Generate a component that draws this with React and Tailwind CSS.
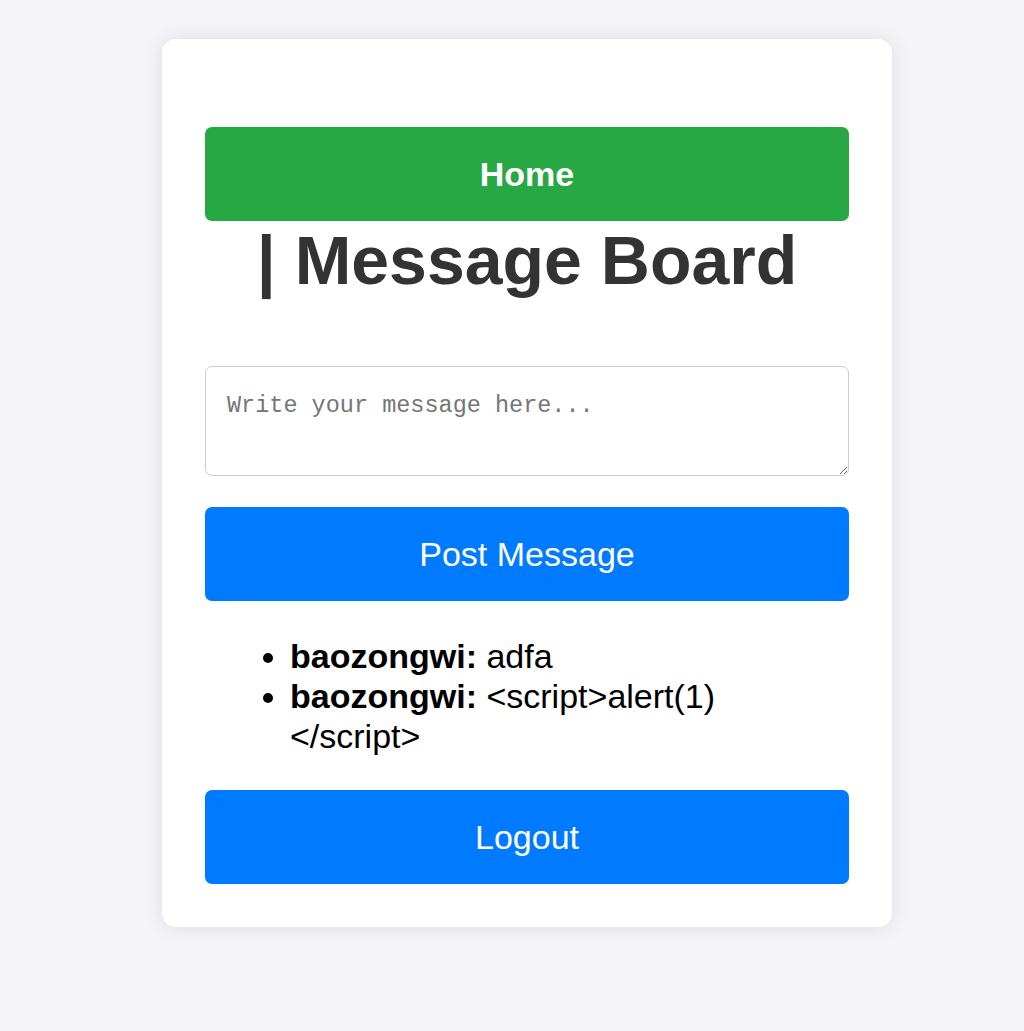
export default function App() {
  const messages = [
    { user: "baozongwi", text: "adfa" },
    { user: "baozongwi", text: "<script>alert(1)", tail: "</script>" },
  ];

  return (
    <div className="min-h-screen bg-[#f4f4f9] pt-[39px] pb-[104px] font-['Liberation_Sans',Arial,sans-serif]">
      <div className="ml-[162px] w-[730px] bg-white rounded-[14px] shadow-[0_0_20px_rgba(0,0,0,0.1)] px-[43px] pt-[88px] pb-[43px]">
        <button className="w-full h-[94px] bg-[#28a745] text-white font-bold text-[34px] rounded-[7px] cursor-pointer">
          Home
        </button>
        <h1 className="text-center text-[68px] font-bold text-[#333] leading-[78px]">
          | Message Board
        </h1>

        <textarea
          placeholder="Write your message here..."
          className="block mt-[67px] w-full h-[110px] box-border border border-[#ccc] rounded-[7px] pt-[21px] px-[21px] text-[23.5px] font-['Liberation_Mono',monospace] placeholder:text-[#757575] outline-none"
        />
        <button className="mt-[31px] w-full h-[94px] bg-[#007bff] text-white text-[34px] rounded-[7px] cursor-pointer">
          Post Message
        </button>

        <ul className="mt-[35px] list-disc pl-[85px] text-[34px] leading-[40px] text-black">
          {messages.map((m, i) => (
            <li key={i}>
              <strong className="font-bold">{m.user}:</strong> {m.text}
              {m.tail && (
                <>
                  <br />
                  {m.tail}
                </>
              )}
            </li>
          ))}
        </ul>

        <button className="mt-[34px] w-full h-[94px] bg-[#007bff] text-white text-[34px] rounded-[7px] cursor-pointer">
          Logout
        </button>
      </div>
    </div>
  );
}
